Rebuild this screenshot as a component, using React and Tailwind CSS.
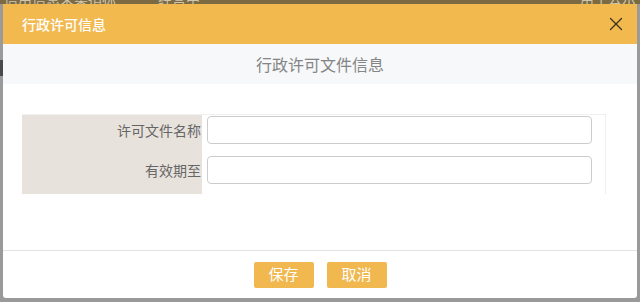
import { X } from 'lucide-react'

const cjk = { fontFamily: '"Microsoft YaHei", "Noto Sans CJK SC", "Liberation Sans", sans-serif' }

function Field({ label }) {
  return (
    <div className="flex h-[30px] items-center">
      <div className="w-[180px] pr-[1px] text-right text-[14px] text-[#666]">{label}</div>
      <input className="ml-[5px] h-[28px] w-[385px] rounded-[4px] border border-[#ccc] bg-white outline-none" />
    </div>
  )
}

export default function App() {
  return (
    <div className="relative h-[302px] w-[640px] overflow-hidden bg-[#9a9a9a]" style={cjk}>
      {/* page behind the dialog */}
      <div className="h-[4px] overflow-hidden bg-[#7b6a42]">
        <div className="-mt-[12px] flex justify-between px-[4px] text-[14px] text-[#cfc6b0]">
          <span>信用信息采集指标　　　经营中</span>
          <span>用于公示</span>
        </div>
      </div>
      <div className="mt-[56px] h-[16px] w-[3px] bg-[#4a4a4a]" />

      {/* dialog */}
      <div className="absolute left-[3px] top-[4px] flex h-[294px] w-[634px] flex-col overflow-hidden rounded-b-[3px] bg-white">
        <div className="flex h-[40px] shrink-0 items-center justify-between bg-[#f2b94f] pl-[19px] pr-[10px]">
          <span className="text-[14px] font-medium text-white">行政许可信息</span>
          <X size={22} strokeWidth={1.4} className="text-[#3f3119]" />
        </div>
        <div className="flex h-[40px] shrink-0 items-center justify-center bg-[#f7f8fa] text-[16px] text-[#858585]">
          行政许可文件信息
        </div>
        <div className="flex-1 pl-[19px] pt-[30px]">
          <div className="w-[584px] border-r border-t border-[#f0f0f0]">
            <div className="flex flex-col gap-[10px] bg-[linear-gradient(to_right,#e8e2dc_180px,transparent_180px)] pb-[9px]">
              <Field label="许可文件名称" />
              <Field label="有效期至" />
            </div>
          </div>
        </div>
        <div className="flex h-[48px] shrink-0 items-center justify-center gap-[13px] border-t border-[#e3e3e3]">
          <button className="h-[26px] w-[60px] rounded-[2px] bg-[#f0b84e] text-[15px] text-white">保存</button>
          <button className="h-[26px] w-[60px] rounded-[2px] bg-[#f0b84e] text-[15px] text-white">取消</button>
        </div>
      </div>
    </div>
  )
}
